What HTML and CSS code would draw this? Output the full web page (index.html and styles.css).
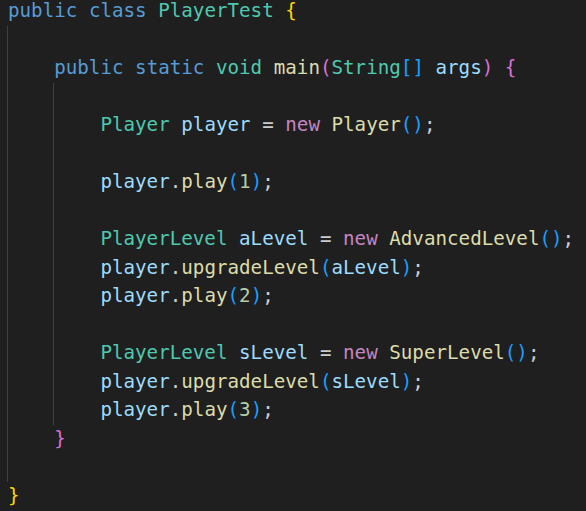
FILE: index.html
```html
<!DOCTYPE html>
<html>
<head>
<meta charset="utf-8">
<link rel="stylesheet" href="styles.css">
</head>
<body>
<div class="code">
  <div class="ln"><span class="kw">public</span> <span class="kw">class</span> <span class="ty">PlayerTest</span> <span class="b1">{</span></div>
  <div class="ln"><span class="ind g"></span></div>
  <div class="ln"><span class="ind g"></span><span class="kw">public</span> <span class="kw">static</span> <span class="ty">void</span> <span class="fn">main</span><span class="b2">(</span><span class="ty">String</span><span class="b3">[]</span> <span class="va">args</span><span class="b2">)</span> <span class="b2">{</span></div>
  <div class="ln"><span class="ind g"></span><span class="ind g"></span></div>
  <div class="ln"><span class="ind g"></span><span class="ind g"></span><span class="ty">Player</span> <span class="va">player</span> <span class="tx">=</span> <span class="ct">new</span> <span class="fn">Player</span><span class="b3">()</span><span class="tx">;</span></div>
  <div class="ln"><span class="ind g"></span><span class="ind g"></span></div>
  <div class="ln"><span class="ind g"></span><span class="ind g"></span><span class="va">player</span><span class="tx">.</span><span class="fn">play</span><span class="b3">(</span><span class="nu">1</span><span class="b3">)</span><span class="tx">;</span></div>
  <div class="ln"><span class="ind g"></span><span class="ind g"></span></div>
  <div class="ln"><span class="ind g"></span><span class="ind g"></span><span class="ty">PlayerLevel</span> <span class="va">aLevel</span> <span class="tx">=</span> <span class="ct">new</span> <span class="fn">AdvancedLevel</span><span class="b3">()</span><span class="tx">;</span></div>
  <div class="ln"><span class="ind g"></span><span class="ind g"></span><span class="va">player</span><span class="tx">.</span><span class="fn">upgradeLevel</span><span class="b3">(</span><span class="va">aLevel</span><span class="b3">)</span><span class="tx">;</span></div>
  <div class="ln"><span class="ind g"></span><span class="ind g"></span><span class="va">player</span><span class="tx">.</span><span class="fn">play</span><span class="b3">(</span><span class="nu">2</span><span class="b3">)</span><span class="tx">;</span></div>
  <div class="ln"><span class="ind g"></span><span class="ind g"></span></div>
  <div class="ln"><span class="ind g"></span><span class="ind g"></span><span class="ty">PlayerLevel</span> <span class="va">sLevel</span> <span class="tx">=</span> <span class="ct">new</span> <span class="fn">SuperLevel</span><span class="b3">()</span><span class="tx">;</span></div>
  <div class="ln"><span class="ind g"></span><span class="ind g"></span><span class="va">player</span><span class="tx">.</span><span class="fn">upgradeLevel</span><span class="b3">(</span><span class="va">sLevel</span><span class="b3">)</span><span class="tx">;</span></div>
  <div class="ln"><span class="ind g"></span><span class="ind g"></span><span class="va">player</span><span class="tx">.</span><span class="fn">play</span><span class="b3">(</span><span class="nu">3</span><span class="b3">)</span><span class="tx">;</span></div>
  <div class="ln"><span class="ind g"></span><span class="b2">}</span></div>
  <div class="ln"><span class="ind g"></span></div>
  <div class="ln"><span class="b1">}</span></div>
</div>
</body>
</html>
```

FILE: styles.css
```css
html, body {
  margin: 0;
  padding: 0;
  background: #1f1f1f;
  height: 100%;
  overflow: hidden;
}
.code {
  margin-top: -3px;
  padding-left: 8px;
  font-family: "DejaVu Sans Mono", "Liberation Mono", monospace;
  font-size: 19.2px;
  color: #cccccc;
}
.ln {
  height: 28.5px;
  line-height: 28.5px;
  white-space: pre;
  display: block;
}
.ind {
  display: inline-block;
  width: 4ch;
  height: 28.5px;
  vertical-align: top;
  box-sizing: border-box;
}
.g {
  border-left: 1px solid #404040;
  margin-left: -1px;
  margin-right: 1px;
}
.kw { color: #569cd6; }
.ty { color: #4ec9b0; }
.fn { color: #dcdcaa; }
.va { color: #9cdcfe; }
.ct { color: #c586c0; }
.nu { color: #b5cea8; }
.tx { color: #cccccc; }
.b1 { color: #ffd700; }
.b2 { color: #da70d6; }
.b3 { color: #179fff; }
```
